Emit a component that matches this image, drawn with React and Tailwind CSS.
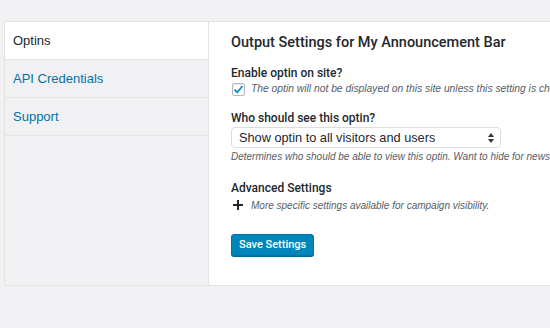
import React from "react"

const font = { fontFamily: '"Liberation Sans", Arial, sans-serif' }
const strong = { fontFamily: 'Roboto, "Liberation Sans", Arial, sans-serif' }

const SideItem = ({ label, active }) => (
    <div className={"h-[38px] flex items-center pl-[8px] border-b border-[#e5e5e5] text-[13px] " + (active ? "bg-white text-[#23282d]" : "text-[#0073aa]")}>
        {label}
    </div>
)

const Label = ({ children }) => (
    <p className="text-[12px] font-medium leading-[16px] text-[#23282d]" style={strong}>{children}</p>
)

const App = () => {
    return (
        <div className="w-[550px] h-[328px] bg-[#f1f0f2] pt-[21px] pl-[4px] overflow-hidden" style={font}>
            <div className="flex h-[265px] border-t border-l border-b border-[#e3e3e3] w-[560px]">

                <div className="w-[204px] shrink-0 border-r border-[#e3e3e3]">
                    <SideItem label="Optins" active />
                    <SideItem label="API Credentials" />
                    <SideItem label="Support" />
                </div>

                <div className="flex-1 bg-white pl-[22px] pt-[11px] text-[#23282d]">
                    <h2 className="text-[14.5px] font-medium leading-[20px]" style={strong}>Output Settings for My Announcement Bar</h2>

                    <div className="mt-[12px]">
                        <Label>Enable optin on site?</Label>
                        <div className="flex items-center gap-[6px] h-[16px]">
                            <span className="ml-[1px] w-[13px] h-[13px] border border-[#b4b9be] rounded-[2px] flex items-center justify-center bg-white shadow-[inset_0_1px_2px_rgba(0,0,0,0.1)]">
                                <svg width="11" height="11" viewBox="0 0 11 11">
                                    <path d="M1.5 5.5 L4.3 8.3 L9.5 2" fill="none" stroke="#1e8cbe" strokeWidth="1.8" />
                                </svg>
                            </span>
                            <span className="text-[10.3px] italic text-[#555d66] whitespace-nowrap">The optin will not be displayed on this site unless this setting is checked.</span>
                        </div>
                    </div>

                    <div className="mt-[13px]">
                        <Label>Who should see this optin?</Label>
                        <div className="mt-[1px] w-[270px] h-[21px] border border-[#dddddd] rounded-[4px] flex items-center justify-between pl-[7px] pr-[6px] text-[12.75px]">
                            <span>Show optin to all visitors and users</span>
                            <svg width="6" height="10" viewBox="0 0 6 10">
                                <path d="M3 0 L6 4 L0 4 Z M3 10 L6 6 L0 6 Z" fill="#333" />
                            </svg>
                        </div>
                        <p className="mt-[2px] text-[10px] leading-[14px] italic text-[#555d66] whitespace-nowrap">Determines who should be able to view this optin. Want to hide for newsletter subscribers?</p>
                    </div>

                    <div className="mt-[16px]">
                        <Label>Advanced Settings</Label>
                        <div className="flex items-center gap-[8px] mt-[1px] h-[16px]">
                            <svg className="ml-[2px]" width="10" height="10" viewBox="0 0 10 10">
                                <path d="M4 0 H6 V4 H10 V6 H6 V10 H4 V6 H0 V4 H4 Z" fill="#23282d" />
                            </svg>
                            <span className="text-[10px] italic text-[#555d66]">More specific settings available for campaign visibility.</span>
                        </div>
                    </div>

                    <button className="mt-[21px] h-[22px] px-[7px] bg-[#0085ba] border border-[#0073aa] rounded-[3px] shadow-[0_1px_0_#006799] text-white text-[11px] font-medium" style={strong}>
                        Save Settings
                    </button>
                </div>
            </div>
        </div>
    )
}

export default App
